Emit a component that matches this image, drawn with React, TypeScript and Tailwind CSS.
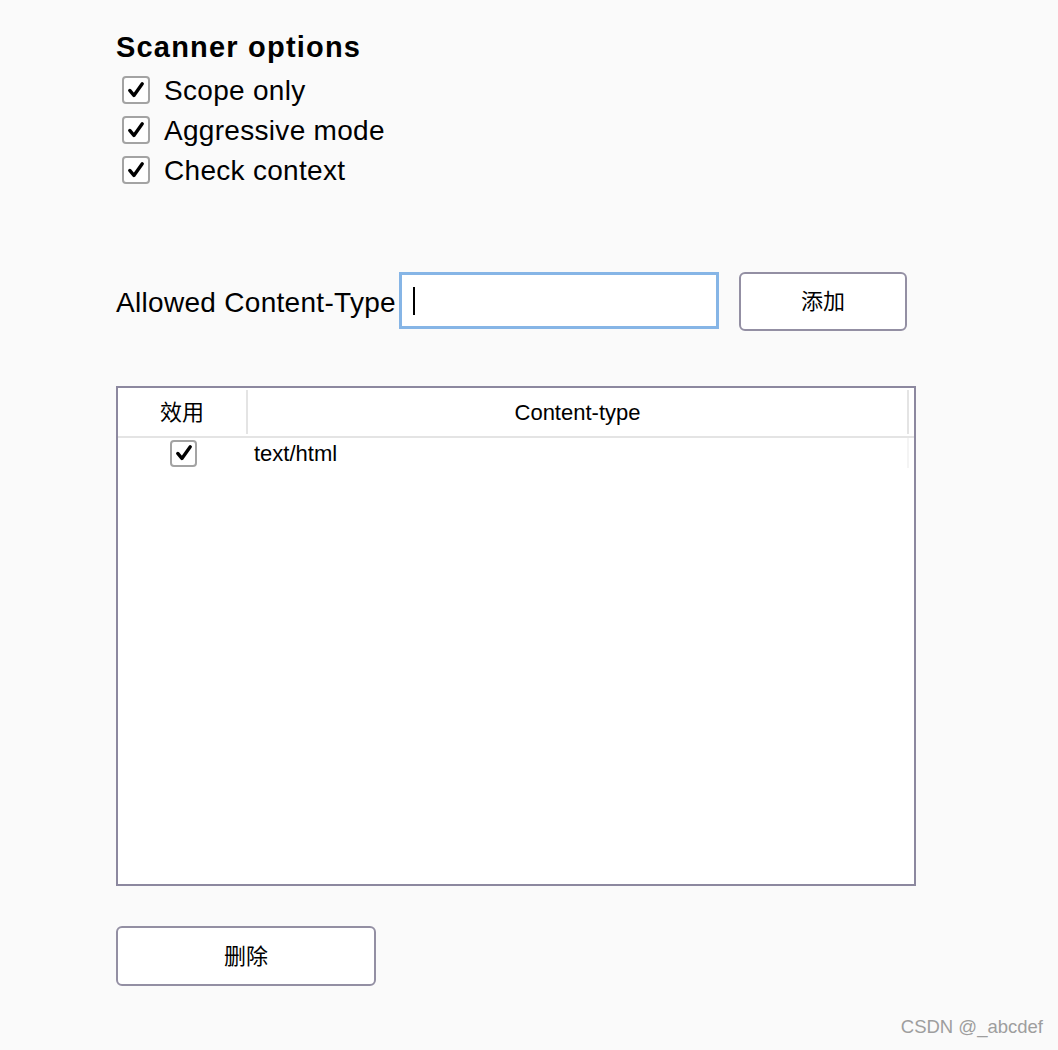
import React, { useState } from 'react';

const font = { fontFamily: '"Liberation Sans", "Noto Sans CJK SC", Arial, sans-serif' };

function Check({ checked, onToggle, size }: { checked: boolean; onToggle: () => void; size: 'lg' | 'md' }) {
  return (
    <button
      type="button"
      onClick={onToggle}
      className={`flex items-center justify-center rounded-[4px] border-2 border-[#a3a3a3] bg-white ${
        size === 'lg' ? 'h-[28px] w-[28px]' : 'h-[27px] w-[27px]'
      }`}
    >
      {checked && (
        <svg viewBox="0 0 24 24" className="h-[20px] w-[20px]">
          <path d="M4.5 12.5 L9.5 18.5 L19.5 4.5" fill="none" stroke="#000" strokeWidth="4" strokeLinecap="round" strokeLinejoin="round" />
        </svg>
      )}
    </button>
  );
}

export default function App() {
  const [options, setOptions] = useState([
    { label: 'Scope only', checked: true },
    { label: 'Aggressive mode', checked: true },
    { label: 'Check context', checked: true },
  ]);
  const [types, setTypes] = useState([{ value: 'text/html', enabled: true }]);
  const [input, setInput] = useState('');

  const toggleOption = (i: number) =>
    setOptions(options.map((o, idx) => (idx === i ? { ...o, checked: !o.checked } : o)));

  return (
    <div className="relative min-h-[1050px] bg-[#fafafa] text-black" style={font}>
      <div className="flex flex-col pl-[116px] pt-[29px]">
        <h1 className="text-[29px] font-bold leading-[36px] tracking-[1.2px]">Scanner options</h1>

        <div className="mt-[5px] flex flex-col pl-[6px]">
          {options.map((o, i) => (
            <div key={o.label} className="flex h-[40px] items-center gap-[14px]">
              <Check checked={o.checked} onToggle={() => toggleOption(i)} size="lg" />
              <span className="mt-[2px] text-[28px] leading-[30px] tracking-[0.3px]">{o.label}</span>
            </div>
          ))}
        </div>

        {/* Allowed content type */}
        <div className="mt-[82px] flex items-start">
          <span className="mt-[16px] text-[28px] leading-[30px] tracking-[0.3px]">Allowed Content-Type</span>
          <div className="ml-[3px] flex h-[57px] w-[320px] items-center border-[3px] border-[#86b5e6] bg-white pl-[11px]">
            {input === '' && <div className="h-[28px] w-[2px] bg-black" />}
            <input
              value={input}
              onChange={(e) => setInput(e.target.value)}
              className="h-[30px] flex-1 bg-transparent text-[22px] outline-none caret-black"
            />
          </div>
          <button
            type="button"
            onClick={() => {
              if (input.trim()) {
                setTypes([...types, { value: input.trim(), enabled: true }]);
                setInput('');
              }
            }}
            className="ml-[20px] h-[59px] w-[168px] rounded-[6px] border-2 border-[#938fa3] bg-white text-[22px]"
          >
            添加
          </button>
        </div>

        {/* Table */}
        <div className="mt-[55px] flex h-[500px] w-[800px] flex-col border-2 border-[#8c889f] bg-white">
          <div className="flex h-[50px] items-center border-b-2 border-[#e4e4e4]">
            <div className="w-[128px] text-center text-[22px]">效用</div>
            <div className="h-[44px] w-[2px] bg-[#e4e4e4]" />
            <div className="flex-1 text-center text-[22px]">Content-type</div>
            <div className="mr-[5px] h-[44px] w-[2px] bg-[#e4e4e4]" />
          </div>
          {types.map((t, i) => (
            <div key={t.value + i} className="flex h-[30px] items-center">
              <div className="flex w-[128px] justify-center pl-[3px]">
                <Check
                  checked={t.enabled}
                  onToggle={() => setTypes(types.map((x, j) => (j === i ? { ...x, enabled: !x.enabled } : x)))}
                  size="md"
                />
              </div>
              <div className="flex-1 pl-[8px] text-[22px]">{t.value}</div>
              <div className="mr-[5px] h-[30px] w-[2px] bg-[#f4f4f4]" />
            </div>
          ))}
        </div>

        <button
          type="button"
          onClick={() => setTypes(types.slice(0, -1))}
          className="mt-[40px] h-[60px] w-[260px] rounded-[6px] border-2 border-[#938fa3] bg-white text-[22px]"
        >
          删除
        </button>
      </div>

      <span className="absolute bottom-[9px] right-[15px] text-[18.5px] text-[#9e9e9e]">CSDN @_abcdef</span>
    </div>
  );
}
